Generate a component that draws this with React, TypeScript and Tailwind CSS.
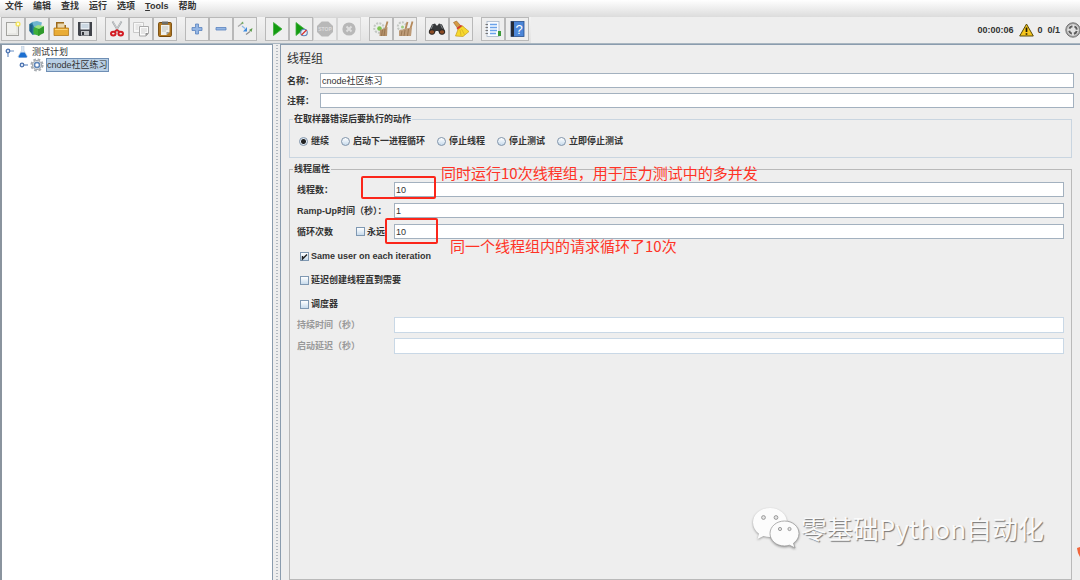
import type { ReactNode } from "react"
import { clsx } from "clsx"

const menus = ["文件", "编辑", "查找", "运行", "选项", "Tools", "帮助"]

const errorActions = ["继续", "启动下一进程循环", "停止线程", "停止测试", "立即停止测试"]

function Icon({ children }: { children: ReactNode }) {
  return (
    <svg viewBox="0 0 18 18" className="h-[18px] w-[18px]" fill="none" aria-hidden="true">
      {children}
    </svg>
  )
}

const toolGroups: { label: string; disabled?: boolean; icon: ReactNode }[][] = [
  [
    {
      label: "新建",
      icon: (
        <>
          <rect x="2.5" y="2.5" width="12" height="13" fill="#f1f1ee" stroke="#a3a39f" />
          <path d="M4 14h9V5" stroke="#dededa" />
          <circle cx="14" cy="4" r="2.6" fill="#f3e45c" />
          <circle cx="14" cy="4" r="1.2" fill="#fffde0" />
        </>
      ),
    },
    {
      label: "模板",
      icon: (
        <>
          <path d="M1.5 4l3-2 4 .5v11.5l-4 1-3-4z" fill="#2b7fa3" />
          <path d="M1.5 4l3 1v9l-3-3z" fill="#1f5f86" />
          <path d="M4 2l5-1 5 1.5L13 6 6 7z" fill="#6fb5cf" />
          <path d="M5.500 8l4-2 2 2v8l-6-2z" fill="#3eaf3a" />
          <path d="M10 8l6-2v7l-6 3z" fill="#2f9a2c" />
          <path d="M6 7l4-2 6 1-5 3z" fill="#9de07f" />
        </>
      ),
    },
    {
      label: "打开",
      icon: (
        <>
          <path d="M4 2h8v3h2v6H4z" fill="#9c6a1c" />
          <path d="M5.5 3.5h7v6h-7z" fill="#e9d6ad" />
          <path d="M2 8h14.500v7.5H2z" fill="#e9ac35" stroke="#b57a1a" strokeWidth=".8" />
          <path d="M3 9.5h12.500" stroke="#f9d37a" />
        </>
      ),
    },
    {
      label: "保存",
      icon: (
        <>
          <path d="M2 2h14v14H3l-1-1z" fill="#40434a" />
          <path d="M4.5 2.5h9v7h-9z" fill="#e8eef4" />
          <path d="M5.5 5h7M5.5 7h7" stroke="#9fb4c8" strokeWidth=".8" />
          <path d="M5 11h8v4.5H5z" fill="#c3c6ca" />
          <path d="M6 12h2v3H6z" fill="#34363c" />
        </>
      ),
    },
  ],
  [
    {
      label: "剪切",
      icon: (
        <>
          <path d="M4.5 1.5l6 10M13.5 1.5l-6 10" stroke="#a2a6a9" strokeWidth="1.8" />
          <path d="M5 2l5 8.5M13 2l-5 8.5" stroke="#e4e6e8" strokeWidth=".6" />
          <ellipse cx="5.3" cy="13.6" rx="2.3" ry="1.9" stroke="#d31c24" strokeWidth="2" />
          <ellipse cx="12.7" cy="13.6" rx="2.3" ry="1.9" stroke="#d31c24" strokeWidth="2" />
          <path d="M6 12l3-2 3 2" stroke="#d31c24" strokeWidth="1.6" />
        </>
      ),
    },
    {
      label: "复制",
      icon: (
        <>
          <path d="M1.5 2.5h10v10h-10z" fill="#f7f7f7" stroke="#c9c9c9" />
          <path d="M3.5 5h6M3.5 7h3M3.5 9h3" stroke="#d5d5d5" />
          <path d="M7.5 6.5h9v7L14 16H7.5z" fill="#fbfbfb" stroke="#a9a9a9" />
          <path d="M9 9h6M9 11h6M9 13h4" stroke="#cfcfcf" />
          <path d="M13.5 16v-3h3z" fill="#8f8f8f" />
        </>
      ),
    },
    {
      label: "粘贴",
      icon: (
        <>
          <rect x="2.6" y="2.5" width="12.8" height="14" rx="1" fill="#b37a22" stroke="#76490b" />
          <path d="M5 5h8.5v7l-3 3H5z" fill="#eff0ec" />
          <path d="M6 7h6M6 9h6M6 11h4" stroke="#b9bab5" strokeWidth=".8" />
          <path d="M13.5 12l-3 3v-3z" fill="#9a9a94" />
          <path d="M6 1.5h6v3H6z" fill="#6c6d69" />
        </>
      ),
    },
  ],
  [
    {
      label: "全部展开",
      icon: (
        <path d="M7.500 4h3v3.500H14v3h-3.500V14h-3v-3.500H4v-3h3.500z" fill="#94b6e4" stroke="#5a83be" strokeWidth=".8" />
      ),
    },
    {
      label: "全部折叠",
      icon: <path d="M4 7.500h10v2.500H4z" fill="#94b6e4" stroke="#5a83be" strokeWidth=".8" />,
    },
    {
      label: "切换",
      icon: (
        <>
          <path d="M2 6.500L6 3.500" stroke="#a5a5a5" strokeWidth="1.200" />
          <path d="M4.500 3.500L7 1.500 7.500 4z" fill="#6fa65e" />
          <path d="M10 14.500l4-3" stroke="#8b8b8b" strokeWidth="1.200" />
          <path d="M13 10L16.500 8l-1 4z" fill="#5b9b48" />
          <path d="M6 6l3 2.500" stroke="#8db8ea" strokeWidth="1.200" />
          <path d="M11 7v4.500H7z" fill="#3d8be0" />
        </>
      ),
    },
  ],
  [
    {
      label: "启动",
      icon: <path d="M5.500 2.500L14 9l-8.500 6.500z" fill="#149c11" stroke="#3fae3c" strokeWidth=".8" />,
    },
    {
      label: "不停顿开始",
      icon: (
        <>
          <path d="M4 2.500L12.500 9 4 15.500z" fill="#149c11" stroke="#3fae3c" strokeWidth=".8" />
          <circle cx="12" cy="12.500" r="3.300" fill="#e8eef8" stroke="#5e83b8" strokeWidth="1.100" />
          <path d="M9.500 15l5-5" stroke="#d8322e" strokeWidth="1.300" />
        </>
      ),
    },
    {
      label: "停止",
      disabled: true,
      icon: (
        <>
          <path d="M5.700 1.500h6.600L17 6v6l-4.700 4.500H5.700L1 12V6z" fill="#b8b8b8" />
          <text x="9" y="11" textAnchor="middle" className="fill-[#dcdcdc] text-[5px] font-bold">
            STOP
          </text>
        </>
      ),
    },
    {
      label: "关闭",
      disabled: true,
      icon: (
        <>
          <circle cx="9" cy="9" r="6.600" fill="#b8b8b8" />
          <path d="M6.500 6.500l5 5M11.500 6.500l-5 5" stroke="#dedede" strokeWidth="2" />
        </>
      ),
    },
  ],
  [
    {
      label: "清除",
      icon: (
        <>
          <circle cx="7" cy="8" r="4.800" fill="#eceeec" stroke="#c3c7c3" strokeDasharray="2 1.200" strokeWidth="2" />
          <circle cx="7.500" cy="8.500" r="2.300" fill="#7fc452" />
          <path d="M15.500 1.500l-2 7" stroke="#b58a5b" strokeWidth="1.800" />
          <path d="M8 10l7.500-3-.5 9H7.500z" fill="#b5916a" />
          <path d="M10.500 10l-1 6M13 9l-1 7" stroke="#8b6844" strokeWidth=".7" />
        </>
      ),
    },
    {
      label: "清除全部",
      icon: (
        <>
          <circle cx="6" cy="6.500" r="4.200" fill="#eceeec" stroke="#c3c7c3" strokeDasharray="2 1.200" strokeWidth="2" />
          <circle cx="6.500" cy="7" r="1.500" fill="#9fce82" />
          <path d="M11.500 2l-2 7M16.500 1.500l-2 7" stroke="#b58a5b" strokeWidth="1.800" />
          <path d="M3 10.500l7-2 6-1-1 8.500H3z" fill="#bd9b78" />
          <path d="M6 11l-1 5M9 10l-1 6M12.500 9l-1 7" stroke="#8b6844" strokeWidth=".7" />
        </>
      ),
    },
  ],
  [
    {
      label: "查找",
      icon: (
        <>
          <path d="M4 4.500l3-1 1.500 2h1L11 3.500l3 1 3 6.500-4 3-3-3H8l-3 3-4-3z" fill="#36383a" />
          <path d="M5 5l-2 4M12.500 4.500l2 4" stroke="#85898c" />
          <ellipse cx="4" cy="12" rx="2.800" ry="2.300" fill="#8c4b23" stroke="#252525" />
          <ellipse cx="14" cy="12" rx="2.800" ry="2.300" fill="#8c4b23" stroke="#252525" />
        </>
      ),
    },
    {
      label: "重置搜索",
      icon: (
        <>
          <path d="M1.500 2.500l3-1.500 4 4.500-3 2.500z" fill="#d49a45" stroke="#9a6521" strokeWidth=".6" />
          <path d="M4.500 8l4.500-3 2.500 1.500L6.500 11z" fill="#d7362c" />
          <path d="M6 9.500L10.500 6 17 11.500 11 16.500 3.500 16z" fill="#f7d92e" stroke="#c49c1c" strokeWidth=".7" />
          <path d="M8 10l1 5.500M9.500 9l3 5.500" stroke="#d2aa22" strokeWidth=".7" />
        </>
      ),
    },
  ],
  [
    {
      label: "函数助手",
      icon: (
        <>
          <rect x="3" y="1.500" width="12" height="15" fill="#f8fbff" stroke="#a7b6c8" strokeWidth=".8" />
          <path d="M6 4.500h7M6 7.500h7M6 10.500h7M6 13.500h6" stroke="#6aa2ea" strokeWidth="1.400" />
          <path d="M1.500 4.500H4M1.500 7.500H4M1.500 10.500H4M1.500 13.500H4" stroke="#777" strokeWidth="1.200" />
          <path d="M14 11h3v5h-3z" fill="#3d9a39" />
        </>
      ),
    },
    {
      label: "帮助",
      icon: (
        <>
          <rect x="3" y="1.500" width="13" height="15" fill="#4b86d8" stroke="#274f8c" strokeWidth=".8" />
          <path d="M3 1.500h3v15H3z" fill="#252b36" />
          <text x="11" y="13.500" textAnchor="middle" className="fill-white text-[13px] font-normal">
            ?
          </text>
        </>
      ),
    },
  ],
]

function WarningIcon() {
  return (
    <svg viewBox="0 0 15 14" className="h-[14px] w-[15px]" aria-hidden="true">
      <path d="M7.500 1L14.300 13H.7z" fill="#f5c51b" stroke="#594a0b" strokeLinejoin="round" />
      <path d="M7.500 4.500v4.500M7.500 10.300v1.500" stroke="#1f1a05" strokeWidth="1.700" />
    </svg>
  )
}

function RemoteIcon() {
  return (
    <svg viewBox="0 0 16 16" className="h-4 w-4 shrink-0" fill="none" aria-hidden="true">
      <circle cx="8" cy="8" r="7.200" fill="#a5a5a5" stroke="#757575" />
      <circle cx="8" cy="8" r="5.800" fill="#e2e2e2" />
      <circle cx="8" cy="8" r="3.900" stroke="#5c5c5c" strokeWidth="2" strokeDasharray="4 2.126" strokeDashoffset="-1.060" />
    </svg>
  )
}

function FlaskIcon() {
  return (
    <svg viewBox="0 0 12 12" className="h-3 w-3" aria-hidden="true">
      <path d="M4.500 0h2.500v4.500l3.500 6-.7 1H1.700L1 10.500l3.500-6z" fill="#dbe7f3" stroke="#b4c3d2" strokeWidth=".5" />
      <path d="M3.800 6.500h3.900l2.300 4-.5 1H2L1.500 10.500z" fill="#1c6fd0" />
    </svg>
  )
}

function GearIcon() {
  return (
    <svg viewBox="0 0 14 14" className="h-[14px] w-[14px]" fill="none" aria-hidden="true">
      <circle cx="7" cy="7" r="5.600" stroke="#a8adb2" strokeWidth="2" strokeDasharray="2.600 1.798" />
      <circle cx="7" cy="7" r="4.600" fill="#dfe2e5" stroke="#a5aaaf" />
      <circle cx="7" cy="7" r="2.500" fill="#fff" stroke="#5d85b8" strokeWidth="1.500" />
    </svg>
  )
}

function TreeHandle({ open }: { open?: boolean }) {
  return (
    <svg viewBox="0 0 10 10" className="h-[10px] w-[10px]" fill="none" aria-hidden="true">
      <path d={open ? "M4 6v4M6 4h4" : "M6 5h4"} stroke="#6b8fc4" strokeWidth="1.200" />
      <circle cx="4" cy={open ? 4 : 5} r="1.800" fill="#dbe6f5" stroke="#476fae" strokeWidth="1.200" />
    </svg>
  )
}

function Radio({ label, checked }: { label: string; checked?: boolean }) {
  return (
    <label className="flex items-center gap-[3px]">
      <input
        type="radio"
        name="onError"
        defaultChecked={checked}
        className="h-[9px] w-[9px] appearance-none rounded-full border border-[#8094aa] bg-linear-to-b from-white to-[#c8dbec] checked:bg-[radial-gradient(circle,#222_0_2px,#e3ecf5_3px)]"
      />
      {label}
    </label>
  )
}

function CheckBox({ label, checked, className }: { label: string; checked?: boolean; className?: string }) {
  return (
    <label className={clsx("flex h-3 items-center gap-[2px]", className)}>
      <span className="relative h-[9px] w-[9px]">
        <input
          type="checkbox"
          defaultChecked={checked}
          className="peer block h-[9px] w-[9px] appearance-none border border-[#7f98b2] bg-linear-to-b from-white to-[#c8dbec]"
        />
        <svg
          viewBox="0 0 9 9"
          className="pointer-events-none absolute inset-0 hidden peer-checked:block"
          fill="none"
          aria-hidden="true"
        >
          <path d="M2.500 4v3L7 2.500" stroke="#222" strokeWidth="1.400" />
        </svg>
      </span>
      {label}
    </label>
  )
}

function TextField({ id, value, disabled }: { id: string; value?: string; disabled?: boolean }) {
  return (
    <input
      id={id}
      type="text"
      defaultValue={value}
      disabled={disabled}
      className={clsx(
        "min-w-0 flex-1 border bg-white px-px font-normal text-[#333]",
        disabled ? "h-4 border-[#c9d8e6]" : "h-[15px] border-[#a3b1bf]",
      )}
    />
  )
}

function WeChatLogo() {
  return (
    <svg viewBox="0 0 48 42" className="h-[42px] w-12 drop-shadow-[0_1px_1px_#999]" aria-hidden="true">
      <path
        d="M18 1C8.500 1 1 7.300 1 15.500c0 4.500 2.300 8.500 6 11.200L5.500 32l6-3c2 .6 4.200 1 6.500 1 9.500 0 17-6.300 17-14.500S27.500 1 18 1z"
        fill="#fcfcfc"
      />
      <path
        d="M32.500 14C24.500 14 18 19.500 18 26.500S24.500 39 32.500 39c1.800 0 3.500-.3 5-.8l5.500 2.800-1.500-4.800c3.400-2.300 5.500-5.700 5.500-9.700C47 19.500 40.500 14 32.500 14z"
        fill="#fcfcfc"
        stroke="#999"
        strokeWidth=".8"
      />
      <g fill="#e5e5e5" stroke="#888" strokeWidth=".8">
        <circle cx="11.500" cy="10.500" r="1.900" />
        <circle cx="24" cy="10.500" r="1.900" />
        <circle cx="28" cy="22" r="1.600" />
        <circle cx="37.500" cy="22" r="1.600" />
      </g>
    </svg>
  )
}

export default function App() {
  return (
    <div className="relative flex min-h-screen flex-col overflow-hidden bg-[#eee] font-['Liberation_Sans','Noto_Sans_CJK_SC',sans-serif] text-[9px] leading-3 font-bold text-[#333]">
      <nav className="flex h-[17px] items-start gap-[10px] bg-linear-to-b from-white to-[#dcdcdc] pl-[5px]">
        {menus.map((menu) => (
          <button key={menu} type="button" className="h-3">
            {menu === "Tools" ? (
              <>
                <u>T</u>ools
              </>
            ) : (
              menu
            )}
          </button>
        ))}
      </nav>

      <header className="flex h-[27px] items-start justify-between border-b border-[#a9b6c0]">
        <div className="flex gap-2 bg-linear-to-b from-[#f3f3f3] to-[#e2e2e2] pr-[2px] pb-[2px] pl-px">
          {toolGroups.map((group, i) => (
            <div key={i} className="flex">
              {group.map((tool) => (
                <button
                  key={tool.label}
                  type="button"
                  aria-label={tool.label}
                  disabled={tool.disabled}
                  className={clsx(
                    "flex h-6 w-6 items-center justify-center border bg-[#eee]",
                    tool.disabled ? "border-[#d6d6d6]" : "border-[#b9b9b9]",
                  )}
                >
                  <Icon>{tool.icon}</Icon>
                </button>
              ))}
            </div>
          ))}
        </div>
        <div className="flex h-[25px] items-center">
          <span>00:00:06</span>
          <span className="ml-[6px]">
            <WarningIcon />
          </span>
          <span className="ml-[3px]">0</span>
          <span className="ml-[5px]">0/1</span>
          <span className="-mr-px ml-[5px]">
            <RemoteIcon />
          </span>
        </div>
      </header>

      <div className="flex flex-1">
        <aside className="w-[273px] shrink-0 border-t border-r border-l-2 border-t-[#8a9cae] border-r-[#8a9cae] border-l-[#8a949e] bg-white font-normal">
          <ul>
            <li>
              <div className="flex h-[13px] items-center pl-[2px]">
                <TreeHandle open />
                <span className="ml-[3px]">
                  <FlaskIcon />
                </span>
                <span className="ml-[3px]">测试计划</span>
              </div>
              <ul>
                <li className="flex h-[14px] items-center pl-4">
                  <TreeHandle />
                  <span className="ml-[2px]">
                    <GearIcon />
                  </span>
                  <span className="ml-[2px] border border-[#6f8fb5] bg-[#b8cfe5]">cnode社区练习</span>
                </li>
              </ul>
            </li>
          </ul>
        </aside>
        <div className="flex w-[7px] shrink-0 justify-center">
          <div className="w-1 bg-[radial-gradient(#b3bac1_0.8px,transparent_1px)] bg-size-[4px_3px]" />
        </div>

        <main className="flex min-w-0 flex-1 flex-col gap-[5px] border-t border-l border-[#8a9cae] px-[6px] pt-[5px]">
          <h1 className="text-[12px] leading-[18px] font-normal">线程组</h1>
          <div className="flex items-center">
            <label htmlFor="name" className="w-[33px] whitespace-nowrap">
              名称：
            </label>
            <TextField id="name" value="cnode社区练习" />
          </div>
          <div className="flex items-center">
            <label htmlFor="comment" className="w-[33px] whitespace-nowrap">
              注释：
            </label>
            <TextField id="comment" />
          </div>

          <fieldset className="mx-[2px] border border-[#c9d5e0] pt-[10px] pb-[10px] pl-[9px]">
            <legend className="-ml-[6px] px-px">在取样器错误后要执行的动作</legend>
            <div className="flex gap-3">
              {errorActions.map((action, i) => (
                <Radio key={action} label={action} checked={i === 0} />
              ))}
            </div>
          </fieldset>

          <fieldset className="mx-[2px] flex-1 border border-[#b9b9b9] px-[7px] pt-[7px]">
            <legend className="-ml-1 px-px">线程属性</legend>

            <div className="flex flex-col gap-[6px]">
              <div className="relative flex items-center">
                <label htmlFor="threads" className="w-[97px]">
                  线程数：
                </label>
                <TextField id="threads" value="10" />
                <span className="absolute -top-[6px] left-16 h-[23px] w-[75px] rounded-xs border-2 border-[#fb261a]" />
                <span className="absolute -top-[19px] left-36 font-['Noto_Sans_CJK_SC',sans-serif] text-[15px] leading-5 font-normal whitespace-nowrap text-[#ff3326]">
                  同时运行10次线程组，用于压力测试中的多并发
                </span>
              </div>
              <div className="flex items-center">
                <label htmlFor="rampUp" className="w-[97px] whitespace-nowrap">
                  Ramp-Up时间（秒）：
                </label>
                <TextField id="rampUp" value="1" />
              </div>
              <div className="relative flex items-center">
                <label htmlFor="loops" className="w-[59px]">
                  循环次数
                </label>
                <CheckBox label="永远" className="w-[38px] whitespace-nowrap" />
                <TextField id="loops" value="10" />
                <span className="absolute -top-[6px] left-[88px] h-[26px] w-[53px] rounded-xs border-2 border-[#fb261a]" />
                <span className="absolute top-3 left-[153px] font-['Noto_Sans_CJK_SC',sans-serif] text-[15px] leading-5 font-normal whitespace-nowrap text-[#ff3326]">
                  同一个线程组内的请求循环了10次
                </span>
              </div>
            </div>

            <div className="mt-[11px] flex flex-col items-start gap-3 pl-[3px]">
              <CheckBox label="Same user on each iteration" checked />
              <CheckBox label="延迟创建线程直到需要" />
              <CheckBox label="调度器" />
            </div>

            <div className="mt-[7px] flex flex-col gap-[5px] text-[#999]">
              <div className="flex items-center">
                <label htmlFor="duration" className="w-[97px]">
                  持续时间（秒）
                </label>
                <TextField id="duration" disabled />
              </div>
              <div className="flex items-center">
                <label htmlFor="delay" className="w-[97px]">
                  启动延迟（秒）
                </label>
                <TextField id="delay" disabled />
              </div>
            </div>
          </fieldset>
        </main>
      </div>

      <div className="absolute right-9 bottom-[31px] flex items-center gap-px">
        <WeChatLogo />
        <span className="font-['Noto_Sans_CJK_SC',sans-serif] text-[26px] leading-[42px] font-normal whitespace-nowrap text-[#fafafa] text-shadow-[1px_1px_1px_#777]">
          零基础Python自动化
        </span>
      </div>
      <svg viewBox="0 0 3 10" className="absolute right-0 bottom-[23px] h-[10px] w-[3px]" aria-hidden="true">
        <path d="M0 1l3-1v10L1 6z" fill="#f2663c" />
      </svg>
    </div>
  )
}
